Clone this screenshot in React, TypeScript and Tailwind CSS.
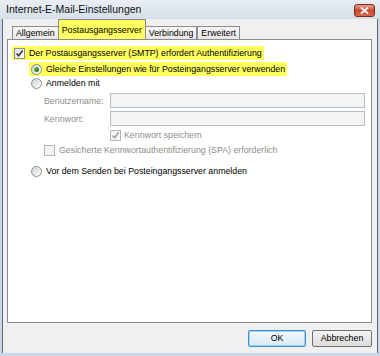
import React from "react";

function CheckBox({ checked, disabled }: { checked?: boolean; disabled?: boolean }) {
  return (
    <span
      className={`flex h-[11px] w-[11px] shrink-0 items-center justify-center border ${
        disabled ? "border-[#b5b5b5] bg-[#f4f4f4]" : "border-[#8e8f8f] bg-gradient-to-br from-[#e0e0e0] to-[#fdfdfd]"
      }`}
    >
      {checked && (
        <svg width="9" height="9" viewBox="0 0 9 9">
          <path
            d="M1.5 4.5 L3.6 6.8 L7.6 1.6"
            fill="none"
            stroke={disabled ? "#a0a0a0" : "#2b3a4a"}
            strokeWidth="1.6"
          />
        </svg>
      )}
    </span>
  );
}

function Radio({ checked }: { checked?: boolean }) {
  return (
    <span className="flex h-[11px] w-[11px] shrink-0 items-center justify-center rounded-full border border-[#8e8f8f] bg-gradient-to-br from-[#d4d4d4] to-[#fbfbfb]">
      {checked && <span className="h-[5px] w-[5px] rounded-full bg-gradient-to-br from-[#6fd14e] to-[#1f5e17]" />}
    </span>
  );
}

function Tab({ label, active }: { label: string; active?: boolean }) {
  return (
    <div
      className={`flex items-center border border-b-0 border-[#898c95] px-[3px] ${
        active ? "h-[20px] bg-[#ffff5e] -mx-[1px] z-10" : "h-[13px] bg-gradient-to-b from-[#f7f7f7] to-[#e6e6e6]"
      }`}
    >
      {label}
    </div>
  );
}

export default function App() {
  return (
    <div
      className="flex h-[356px] w-[380px] flex-col bg-[#c9d7e6] text-[8.8px] text-black"
      style={{ fontFamily: '"Liberation Sans", Arial, sans-serif' }}
    >
      {/* title bar */}
      <div className="flex h-[19px] items-start justify-between bg-gradient-to-b from-[#e9eef4] to-[#d6dfe9] pl-[6px] pr-[5px] pt-[3px]">
        <span className="text-[10.5px] leading-[13px] text-[#111]">Internet-E-Mail-Einstellungen</span>
        <span className="mt-[1px] flex h-[13px] w-[21px] items-center justify-center rounded-[3px] border border-[#7a2a1e] bg-gradient-to-b from-[#e8a090] via-[#c94a30] to-[#d8684e]">
          <svg width="9" height="7" viewBox="0 0 9 7">
            <path d="M1 0.5 L8 6.5 M8 0.5 L1 6.5" stroke="#fff" strokeWidth="1.8" />
          </svg>
        </span>
      </div>

      {/* dialog body */}
      <div className="ml-[2px] mr-[2px] mb-[3px] flex flex-1 flex-col border-l border-r border-[#5d6874] bg-[#f0f0f0] pl-[4px] pr-[5px]">
        {/* tabs */}
        <div className="flex items-end pl-[5px] leading-[12px]">
          <Tab label="Allgemein" />
          <Tab label="Postausgangsserver" active />
          <Tab label="Verbindung" />
          <Tab label="Erweitert" />
        </div>

        {/* panel */}
        <div className="flex h-[284px] flex-col border border-[#898c95] bg-white pl-[4px] pt-[6px] leading-[12px]">
          <div className="flex items-center gap-[4px] self-start bg-[#ffff5e] py-[1px] pl-[2px] pr-[2px]">
            <CheckBox checked />
            <span>Der Postausgangsserver (SMTP) erfordert Authentifizierung</span>
          </div>

          <div className="ml-[17px] mt-[2px] flex items-center gap-[4px] self-start bg-[#ffff5e] py-[1px] pl-[2px] pr-[2px]">
            <Radio checked />
            <span>Gleiche Einstellungen wie für Posteingangsserver verwenden</span>
          </div>

          <div className="ml-[19px] mt-[1px] flex items-center gap-[4px]">
            <Radio />
            <span>Anmelden mit</span>
          </div>

          <div className="ml-[32px] mt-[4px] flex flex-col gap-[3px] pr-[6px] text-[#8d8d8d]">
            <div className="flex items-center">
              <span className="w-[66px]">Benutzername:</span>
              <span className="h-[15px] flex-1 border border-[#b5bdc6] bg-[#f4f4f4]" />
            </div>
            <div className="flex items-center">
              <span className="w-[66px]">Kennwort:</span>
              <span className="h-[15px] flex-1 border border-[#b5bdc6] bg-[#f4f4f4]" />
            </div>
            <div className="ml-[66px] flex items-center gap-[3px]">
              <CheckBox checked disabled />
              <span>Kennwort speichern</span>
            </div>
            <div className="flex items-center gap-[4px]">
              <CheckBox disabled />
              <span>Gesicherte Kennwortauthentifizierung (SPA) erforderlich</span>
            </div>
          </div>

          <div className="ml-[19px] mt-[9px] flex items-center gap-[4px]">
            <Radio />
            <span>Vor dem Senden bei Posteingangsserver anmelden</span>
          </div>
        </div>

        {/* buttons */}
        <div className="mt-[7px] flex justify-end gap-[6px]">
          <button className="flex h-[17px] w-[58px] items-center justify-center rounded-[2px] border border-[#3c8fd0] bg-gradient-to-b from-[#f4f9fd] to-[#d9e8f5] text-[8.8px] shadow-[inset_0_0_0_1px_#9ed4f3]">
            OK
          </button>
          <button className="flex h-[17px] w-[60px] items-center justify-center rounded-[2px] border border-[#707070] bg-gradient-to-b from-[#f4f4f4] to-[#dcdcdc] text-[8.8px]">
            Abbrechen
          </button>
        </div>
      </div>
    </div>
  );
}
